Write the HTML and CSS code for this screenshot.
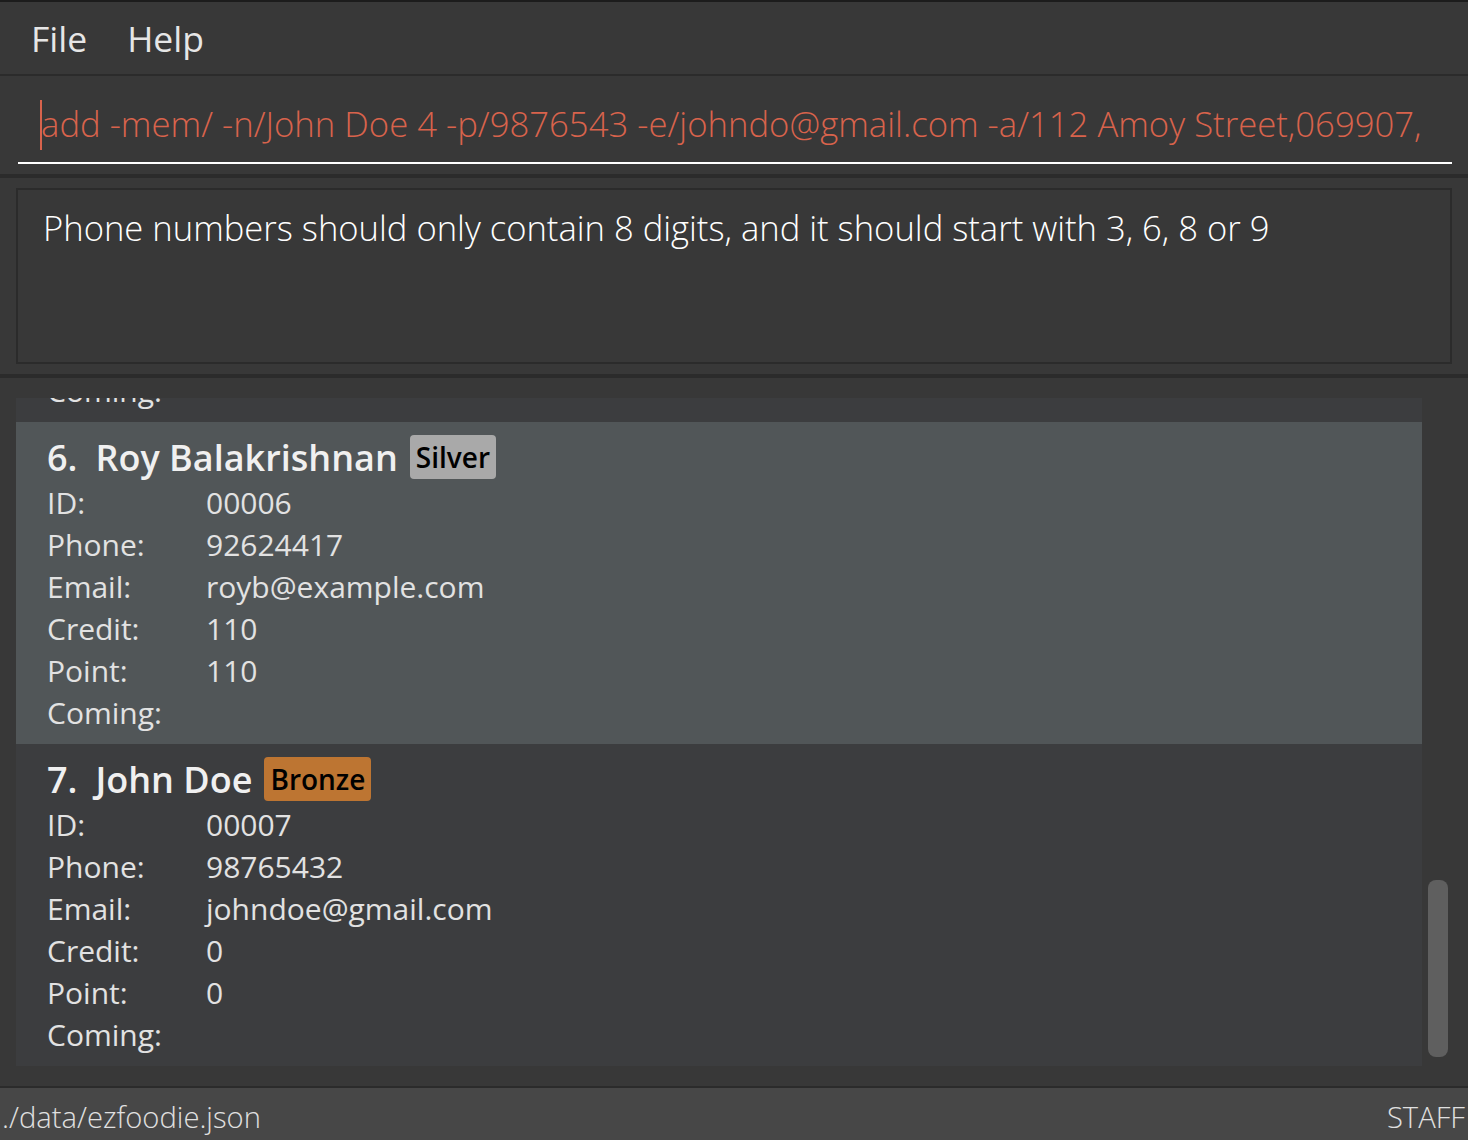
FILE: index.html
```html
<!DOCTYPE html>
<html>
<head>
<meta charset="utf-8">
<link rel="stylesheet" href="styles.css">
</head>
<body>
<div class="app">
  <div class="menubar">
    <span class="menu-item">File</span>
    <span class="menu-item">Help</span>
  </div>
  <div class="command-area">
    <div class="command-input"><span class="caret"></span>add -mem/ -n/John Doe 4 -p/9876543 -e/johndo@gmail.com -a/112 Amoy Street,069907,</div>
  </div>
  <div class="result-area">
    <div class="result-box">Phone numbers should only contain 8 digits, and it should start with 3, 6, 8 or 9</div>
  </div>
  <div class="list-area">
    <div class="list-viewport">
      <div class="card card-partial">
        <div class="row"><span class="label">Coming:</span><span class="value"></span></div>
      </div>
      <div class="card card-selected">
        <div class="name-line"><span class="idx">6.</span><span class="name">Roy Balakrishnan</span><span class="badge badge-silver">Silver</span></div>
        <div class="row"><span class="label">ID:</span><span class="value">00006</span></div>
        <div class="row"><span class="label">Phone:</span><span class="value">92624417</span></div>
        <div class="row"><span class="label">Email:</span><span class="value">royb@example.com</span></div>
        <div class="row"><span class="label">Credit:</span><span class="value">110</span></div>
        <div class="row"><span class="label">Point:</span><span class="value">110</span></div>
        <div class="row"><span class="label">Coming:</span><span class="value"></span></div>
      </div>
      <div class="card">
        <div class="name-line"><span class="idx">7.</span><span class="name">John Doe</span><span class="badge badge-bronze">Bronze</span></div>
        <div class="row"><span class="label">ID:</span><span class="value">00007</span></div>
        <div class="row"><span class="label">Phone:</span><span class="value">98765432</span></div>
        <div class="row"><span class="label">Email:</span><span class="value">johndoe@gmail.com</span></div>
        <div class="row"><span class="label">Credit:</span><span class="value">0</span></div>
        <div class="row"><span class="label">Point:</span><span class="value">0</span></div>
        <div class="row"><span class="label">Coming:</span><span class="value"></span></div>
      </div>
    </div>
    <div class="scrollbar"><div class="thumb"></div></div>
  </div>
  <div class="statusbar">
    <span class="status-path">./data/ezfoodie.json</span>
    <span class="status-role">STAFF</span>
  </div>
</div>
</body>
</html>
```
FILE: styles.css
```css
html, body {
  margin: 0;
  padding: 0;
}
body {
  width: 1468px;
  height: 1140px;
  overflow: hidden;
  background: #383838;
  font-family: "Open Sans", "Noto Sans", sans-serif;
}
.app {
  display: flex;
  flex-direction: column;
  height: 1140px;
  border-top: 2px solid #1c1c1c;
  box-sizing: border-box;
}
.menubar {
  height: 74px;
  flex: none;
  display: flex;
  align-items: center;
  gap: 40px;
  padding-left: 31px;
  padding-bottom: 0;
  box-sizing: border-box;
  background: #383838;
  border-bottom: 2px solid #2b2b2b;
}
.menu-item {
  font-size: 35.5px;
  color: #e6e6e6;
  font-weight: 400;
}
.command-area {
  flex: none;
  height: 102px;
  box-sizing: border-box;
  padding: 22px 16px 0 18px;
  border-bottom: 4px solid #2b2b2b;
}
.command-input {
  position: relative;
  height: 66px;
  box-sizing: border-box;
  border-bottom: 2px solid #ffffff;
  padding-left: 23px;
  font-size: 34.7px;
  font-weight: 300;
  line-height: 52px;
  color: #d8634c;
  white-space: nowrap;
  overflow: hidden;
}
.caret {
  position: absolute;
  left: 22px;
  top: 2px;
  width: 2px;
  height: 50px;
  background: #d8634c;
}
.result-area {
  flex: none;
  height: 200px;
  box-sizing: border-box;
  padding: 10px 16px 10px 16px;
  border-bottom: 4px solid #2b2b2b;
}
.result-box {
  height: 176px;
  box-sizing: border-box;
  border: 2px solid #2b2b2b;
  padding: 14px 25px;
  font-size: 34.6px;
  font-weight: 300;
  line-height: 48px;
  color: #ffffff;
}
.list-area {
  flex: none;
  height: 710px;
  box-sizing: border-box;
  padding: 20px 0 20px 16px;
  display: flex;
  border-bottom: 2px solid #2b2b2b;
}
.list-viewport {
  width: 1406px;
  height: 668px;
  overflow: hidden;
  background: #3c3d3f;
}
.card {
  background: #3c3d3f;
  padding: 13px 0 10px 31px;
  color: #e2e2e2;
}
.card-selected {
  background: #515658;
}
.card-partial {
  height: 24px;
  padding: 0 0 10px 31px;
  box-sizing: border-box;
  display: flex;
  flex-direction: column;
  justify-content: flex-end;
  overflow: hidden;
}
.card-partial .row {
  flex: none;
}
.name-line {
  display: flex;
  align-items: center;
  height: 44px;
  margin-bottom: 3px;
  font-size: 36px;
  font-weight: 600;
  color: #f0f0f0;
}
.idx {
  margin-right: 18px;
}
.name {
  margin-right: 12px;
}
.badge {
  display: inline-block;
  height: 44px;
  line-height: 44px;
  padding: 0 6px;
  border-radius: 4px;
  font-size: 28px;
  font-weight: 600;
  color: #000000;
}
.badge-silver {
  background: #a9a9a9;
}
.badge-bronze {
  background: #bd7532;
}
.row {
  display: flex;
  height: 42px;
  line-height: 42px;
  font-size: 30px;
  font-weight: 400;
}
.label {
  width: 159px;
  flex: none;
}
.scrollbar {
  flex: 1;
  position: relative;
}
.thumb {
  position: absolute;
  left: 6px;
  top: 482px;
  width: 20px;
  height: 177px;
  border-radius: 8px;
  background: #5f5f5f;
}
.statusbar {
  flex: 1;
  display: flex;
  align-items: center;
  justify-content: space-between;
  background: #474747;
  padding: 6px 3px 0 2px;
  box-sizing: border-box;
  font-size: 29.2px;
  font-weight: 300;
  color: #e0e0e0;
}
```
